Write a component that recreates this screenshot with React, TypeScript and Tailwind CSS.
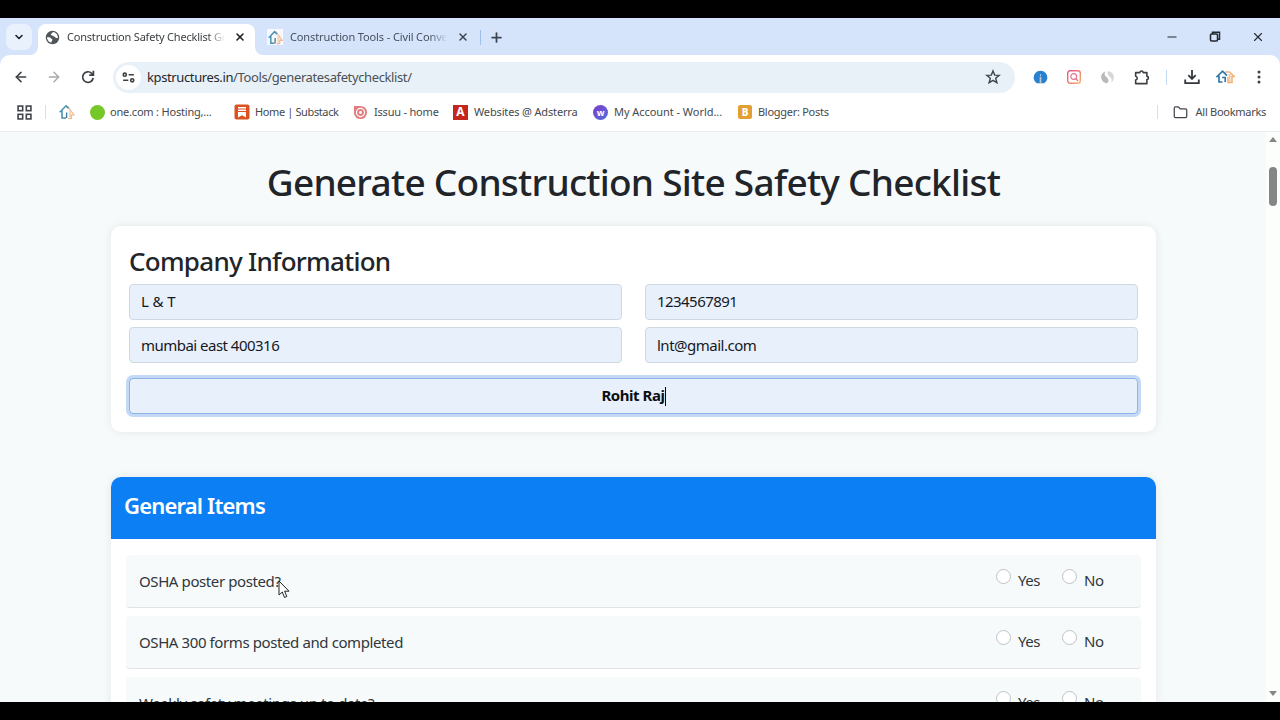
import React, { useState } from "react";
import { ChevronDown, X, Plus, ArrowLeft, ArrowRight, Folder, Minus } from "lucide-react";

const companyFields = [
  { value: "L & T", className: "pb-px tracking-[-0.1px]" },
  { value: "1234567891", className: "pb-px tracking-[-0.55px]" },
  { value: "mumbai east 400316", className: "tracking-[-0.52px]" },
  { value: "lnt@gmail.com", className: "tracking-[-0.5px]" },
];

const generalItems = [
  "OSHA poster posted?",
  "OSHA 300 forms posted and completed",
  "Weekly safety meetings up to date?",
];

function HouseIcon({ className = "" }: { className?: string }) {
  return (
    <svg viewBox="0 0 16 16" className={className} fill="none">
      <path d="M8.500 1.800 15 11h-2.500v3.500H9" stroke="#f0b890" strokeWidth="1.200" />
      <path d="M10 5.500v8h2V8.500z" fill="#f6d2ae" />
      <path d="M7 14H3V7.500H1.500L7 1.800l2.500 2.600" stroke="#4a93b4" strokeWidth="1.600" />
      <path d="M7.600 14V8.500" stroke="#3f7f9d" strokeWidth="1.400" />
    </svg>
  );
}

function HouseWideIcon() {
  return (
    <svg viewBox="0 0 19 16" className="ml-[16px] w-[19px] h-[16px]" fill="none">
      <path d="M9 3h4.500l4.500 4.500h-2v6h-4V8" stroke="#f0b47c" strokeWidth="1.600" />
      <path d="M12.500 5h2v8h-2z" fill="#f4c79a" />
      <path d="M6.500 13H3V7.500H1.200L6.500 2.200l4.500 4.500" stroke="#2f77a8" strokeWidth="1.700" />
      <path d="M6 8.500h3.200V13" stroke="#2f77a8" strokeWidth="1.600" />
    </svg>
  );
}

function GlobeIcon() {
  return (
    <svg viewBox="0 0 16 16" className="w-[15px] h-[15px] shrink-0">
      <circle cx="8" cy="8" r="7.200" fill="#50555a" />
      <path d="M2.200 7.500c2 .2 3.600.3 4.200 1.400.3.800 1.500.7 1.500 1.800 0 1-1.200 1-1.200 2.800C4 13 2.100 10.500 2.200 7.500z" fill="#fff" />
      <path d="M8.600 2.100c-1.300.6-.8 1.600-2 2-1 .4-.5 1.500.6 1.500 1.200 0 1.300 1.400 2.600 1.400 1.200 0 1 1.600 2.200 1.600h1.800c.2-3.200-2-6.100-5.200-6.500z" fill="#fff" />
    </svg>
  );
}

function TabFlare({ side }: { side: "left" | "right" }) {
  return (
    <svg
      viewBox="0 0 8 8"
      className={side === "left" ? "absolute bottom-0 -left-2 w-2 h-2" : "absolute bottom-0 -right-2 w-2 h-2"}
    >
      <path d={side === "left" ? "M8 0v8H0a8 8 0 0 0 8-8z" : "M0 0v8h8a8 8 0 0 1-8-8z"} fill="#fff" />
    </svg>
  );
}

function TabStrip() {
  return (
    <div className="flex h-[37px] bg-[#d5e3fb] text-[11px]">
      <div className="flex items-center justify-center mt-[6px] ml-[6px] w-[26px] h-[26px] rounded-lg bg-[#e9f1fd] shrink-0">
        <ChevronDown className="w-3 h-3 text-[#1f2328]" strokeWidth={3.2} />
      </div>
      <div className="relative flex items-center mt-[6px] ml-[6px] pl-[7px] pb-[5px] w-[217px] h-[31px] bg-white rounded-t-lg shrink-0">
        <TabFlare side="left" />
        <GlobeIcon />
        <div className="ml-[7px] mt-px w-[158px] overflow-hidden whitespace-nowrap text-[#3c4043] tracking-[-0.2px] [mask-image:linear-gradient(to_right,#000_141px,transparent_158px)]">
          Construction Safety Checklist Generator
        </div>
        <X className="ml-[9px] w-3 h-3 text-[#1f2328]" strokeWidth={3.2} />
        <TabFlare side="right" />
      </div>
      <div className="flex items-center mt-[6px] ml-[12px] w-[213px] h-[26px] shrink-0">
        <div className="flex items-center justify-center w-4 h-4 bg-white/80">
          <HouseIcon className="w-[15px] h-[15px]" />
        </div>
        <div className="ml-[7px] mt-px w-[157px] overflow-hidden whitespace-nowrap text-[#46505e] tracking-[-0.12px] [mask-image:linear-gradient(to_right,#000_140px,transparent_157px)]">
          Construction Tools - Civil Converter
        </div>
        <X className="ml-[10px] w-3 h-3 text-[#3c4450]" strokeWidth={3} />
      </div>
      <div className="mt-[12px] w-px h-[15px] bg-[#9ec0ec]" />
      <Plus className="mt-[12px] ml-[8px] w-[15px] h-[15px] text-[#3c4450]" strokeWidth={2.8} />
      <div className="flex ml-auto mt-[12px] mr-[15px] text-[#23282f]">
        <Minus className="w-[14px] h-[14px]" strokeWidth={2} />
        <svg viewBox="0 0 14 14" className="ml-[29px] w-[14px] h-[14px]" fill="none" stroke="currentColor" strokeWidth="1.500">
          <rect x="2.500" y="4" width="7" height="7" rx="1" />
          <path d="M4.500 4V2.300h7v7H9.800" />
        </svg>
        <X className="ml-[29px] w-[14px] h-[14px]" strokeWidth={1.9} />
      </div>
    </div>
  );
}

function Toolbar() {
  return (
    <div className="bg-[#d5e3fb]">
      <div className="flex items-center h-[44px] pl-[13px] bg-white rounded-t-[10px]">
        <ArrowLeft className="w-[16px] h-[16px] text-[#3c4043]" strokeWidth={2.3} />
        <ArrowRight className="ml-[17px] w-[16px] h-[16px] text-[#a5a8ab]" strokeWidth={2.1} />
        <svg viewBox="0 0 16 16" className="ml-[18px] w-4 h-4" fill="none" stroke="#3c4043" strokeWidth="1.700">
          <path d="M13.200 9a5.300 5.300 0 1 1-1.500-4.700L13 5.700" />
          <path d="M13.400 1.800v4.300H9.200" />
        </svg>
        <div className="flex items-center ml-[17px] pl-[3px] w-[902px] h-[31px] bg-[#e9f1f8] rounded-full">
          <div className="flex items-center justify-center w-[25px] h-[25px] rounded-full bg-white">
            <svg viewBox="0 0 14 14" className="w-[13px] h-[13px]" fill="none" stroke="#3c4043" strokeWidth="1.700">
              <circle cx="3" cy="4" r="1.700" />
              <path d="M7.200 4h5.600M1.200 10H6.800" />
              <circle cx="11" cy="10" r="1.700" />
            </svg>
          </div>
          <div className="ml-[6px] mt-px text-[13px] tracking-[-0.38px] text-[#4b5054]">
            <span className="text-[#24282c]">kpstructures.in</span>/Tools/generatesafetychecklist/
          </div>
          <svg viewBox="0 0 16 16" className="ml-auto mr-[14px] w-4 h-4" fill="none" stroke="#41464b" strokeWidth="1.400">
            <path d="m8 1.900 1.700 4.200 4.500.3-3.500 2.900 1.200 4.400L8 11.300l-3.900 2.400 1.200-4.400-3.500-2.900 4.500-.3z" />
          </svg>
        </div>
        <svg viewBox="0 0 16 16" className="ml-[18px] w-[15px] h-[15px]">
          <path d="M4 14.200a7.300 7.300 0 1 1 8 0z" fill="#2a80d0" />
          <path d="M8 4.500v2" stroke="#a9cdf0" strokeWidth="1.200" />
          <path d="M8 7.200v7" stroke="#b9c8c6" strokeWidth="1.800" />
        </svg>
        <svg viewBox="0 0 16 16" className="ml-[18px] w-4 h-4" fill="none" strokeWidth="1.400">
          <defs>
            <linearGradient id="insta" x1="0" y1="0" x2="1" y2="1">
              <stop offset="0" stopColor="#e0559a" />
              <stop offset=".5" stopColor="#f07b74" />
              <stop offset="1" stopColor="#f3b474" />
            </linearGradient>
          </defs>
          <rect x="1.700" y="1.700" width="12.600" height="12.600" rx="2.500" stroke="url(#insta)" />
          <circle cx="7.700" cy="7.500" r="2.900" stroke="#e8728a" strokeWidth="1.200" />
          <path d="m9.900 9.700 2.200 2.200" stroke="#e8728a" />
        </svg>
        <svg viewBox="0 0 16 16" className="ml-[18px] w-[15px] h-[15px]">
          <path d="M6 1.500C2.500 2.500.8 5.500 1.300 8.500c.6 3.200 3.200 5.300 5.700 5.500 2.300-.6 2.800-3 1.300-5L5.800 6.300C4.500 4.800 4.700 3 6 1.500z" fill="#b9b9b9" />
          <path d="M8.500 1.300c3.500.3 6.200 2.700 6.300 6.200 0 2.500-1 4.500-3 5.800.9-1.700.8-3.500-.4-5L9 5.500c-1.200-1.500-1.200-3-.5-4.200z" fill="#d6d6d6" />
        </svg>
        <svg viewBox="0 0 18 18" className="ml-[18px] w-[17px] h-[17px]" fill="none" stroke="#3c4043" strokeWidth="1.700">
          <path d="M2.800 3.800h4.500a1.700 1.700 0 0 1 3.400 0h4v4a1.600 1.600 0 0 1 0 3.300v4.400H2.800v-3.800c2.200-.6 2.200-3.500 0-4z" strokeLinejoin="round" />
        </svg>
        <div className="ml-[16px] w-px h-[15px] bg-[#c5daf4]" />
        <svg viewBox="0 0 16 16" className="ml-[17px] w-4 h-4" fill="none" stroke="#34383c" strokeWidth="1.800">
          <path d="M8 1v8.500M4.300 6.200 8 9.900l3.700-3.700M1.200 10.500v3.600h13.600v-3.600" />
        </svg>
        <HouseWideIcon />
        <svg viewBox="0 0 16 16" className="ml-[16px] w-4 h-4" fill="#3c4043">
          <circle cx="8" cy="3" r="1.500" />
          <circle cx="8" cy="8" r="1.500" />
          <circle cx="8" cy="13" r="1.500" />
        </svg>
      </div>
    </div>
  );
}

function BookmarksBar() {
  return (
    <div className="flex items-center h-[33px] pb-[6px] bg-white border-b border-[#e9ebec] text-[11px] text-[#45494d] whitespace-nowrap">
      <svg viewBox="0 0 14 14" className="ml-[17px] w-[15px] h-[15px] shrink-0" fill="none" stroke="#41464b" strokeWidth="1.500">
        <rect x="1" y="1" width="4.300" height="4.300" />
        <rect x="8.700" y="1" width="4.300" height="4.300" />
        <rect x="1" y="8.700" width="4.300" height="4.300" />
        <rect x="8.700" y="8.700" width="4.300" height="4.300" />
      </svg>
      <div className="ml-[13px] w-px h-[14px] bg-[#d3e1f3] shrink-0" />
      <HouseIcon className="ml-[13px] w-4 h-4 shrink-0" />
      <div className="flex items-center ml-[15px] w-[144px]">
        <div className="w-[15px] h-[15px] rounded-full bg-[#76c728]" />
        <span className="ml-[5px] mt-px tracking-[-0.2px]">one.com : Hosting,...</span>
      </div>
      <div className="flex items-center w-[119px]">
        <svg viewBox="0 0 16 16" className="w-4 h-4">
          <rect x=".5" y=".5" width="15" height="15" rx="2" fill="#d9521f" />
          <path d="M4 3h8v1.500H4zM4 5.500h8V7H4zM4 8h8v5.500l-4-2.300-4 2.300z" fill="#fff" />
        </svg>
        <span className="ml-[5px] mt-px tracking-[-0.38px]">Home | Substack</span>
      </div>
      <div className="flex items-center w-[100px]">
        <svg viewBox="0 0 16 16" className="w-[15px] h-[15px]" fill="none">
          <path d="M1 1h7a7 7 0 1 1-7 7z" fill="#e17f80" />
          <circle cx="8" cy="8" r="4.300" stroke="#fff" strokeWidth="1.300" />
          <circle cx="8" cy="8" r="1.500" fill="#fff" />
        </svg>
        <span className="ml-[6px] mt-px tracking-[-0.2px]">Issuu - home</span>
      </div>
      <div className="flex items-center w-[140px]">
        <div className="flex items-center justify-center w-[15px] h-[15px] bg-[#c3271d] text-white text-[12px] font-bold leading-none">A</div>
        <span className="ml-[6px] mt-px tracking-[-0.15px]">Websites @ Adsterra</span>
      </div>
      <div className="flex items-center w-[145px]">
        <div className="flex items-center justify-center w-[15px] h-[15px] rounded-full bg-linear-to-br from-[#7a35c8] to-[#4a6fe0] text-white text-[9px] font-bold leading-none">
          w
        </div>
        <span className="ml-[6px] mt-px tracking-[-0.05px]">My Account - World...</span>
      </div>
      <div className="flex items-center">
        <div className="flex items-center justify-center w-[14px] h-[14px] rounded-[2px] bg-[#e2a033] text-white text-[10px] font-extrabold leading-none">
          B
        </div>
        <span className="ml-[6px] mt-px tracking-[-0.28px]">Blogger: Posts</span>
      </div>
      <div className="ml-auto w-px h-[14px] bg-[#d3e1f3]" />
      <Folder className="ml-[14px] w-[17px] h-[15px] text-[#41464b]" strokeWidth={2} />
      <span className="ml-[7px] mr-[14px] mt-px tracking-[-0.28px]">All Bookmarks</span>
    </div>
  );
}

function CompanyCard() {
  return (
    <section className="h-[206px] px-[18px] pt-[19px] bg-white rounded-[10px] shadow-[0_0_10px_rgba(0,0,0,0.08)]">
      <h2 className="h-[39px] text-[26px] leading-[32px] font-medium text-[#212529] whitespace-nowrap tracking-[-0.72px]">
        Company Information
      </h2>
      <div className="grid grid-cols-2 gap-x-[23px] gap-y-[7px]">
        {companyFields.map((field) => (
          <div
            key={field.value}
            className={`flex items-center h-[36px] px-[11px] bg-[#e8f0fc] border border-[#cfd9e3] rounded-[4px] text-[15px] text-[#15191d] ${field.className}`}
          >
            {field.value}
          </div>
        ))}
      </div>
      <div className="flex items-center justify-center mt-[15px] h-[36px] bg-[#e8f0fc] border border-[#8db4e8] rounded-[4px] ring-3 ring-[#c4d9f5] text-[15px] font-bold text-[#0c0f12]">
        <span className="pb-px tracking-[-0.45px]">Rohit Raj</span>
        <span className="w-px h-[19px] bg-black" />
      </div>
    </section>
  );
}

function RadioOption({ label, checked, onSelect }: { label: string; checked: boolean; onSelect: () => void }) {
  return (
    <button onClick={onSelect} className="flex w-[66px] text-left">
      <span
        className={`w-[15px] h-[15px] mt-[14px] rounded-full border ${
          checked ? "bg-[#0d6efd] border-[#0d6efd]" : "bg-white border-[#bfc3c6]"
        }`}
      />
      <span className="ml-[7px] mt-[14px] leading-[22px]">{label}</span>
    </button>
  );
}

function ChecklistRow({ label }: { label: string }) {
  const [answer, setAnswer] = useState("");
  return (
    <div className="flex h-[53px] pl-[13px] bg-[#f7fafb] border-b border-[#e0e4e6] rounded-[4px] text-[15px] text-[#30363b] shrink-0">
      <span className="mt-[15px] leading-[22px] whitespace-nowrap tracking-[-0.4px]">{label}</span>
      <div className="flex items-start ml-auto mr-[13px] tracking-[-0.5px]">
        <RadioOption label="Yes" checked={answer === "yes"} onSelect={() => setAnswer("yes")} />
        <RadioOption label="No" checked={answer === "no"} onSelect={() => setAnswer("no")} />
      </div>
    </div>
  );
}

function Scrollbar() {
  return (
    <div className="flex flex-col items-center w-[14px] bg-[#fcfefc] shrink-0">
      <svg viewBox="0 0 8 5" className="mt-[5px] w-2 h-[5px]">
        <path d="M0 5 4 0l4 5z" fill="#858585" />
      </svg>
      <div className="mt-[25px] w-2 h-[39px] rounded-full bg-[#858585]" />
      <svg viewBox="0 0 8 5" className="mt-auto mb-[6px] w-2 h-[5px]">
        <path d="M0 0l4 5 4-5z" fill="#858585" />
      </svg>
    </div>
  );
}

export default function App() {
  return (
    <div className="relative w-[1280px] h-[720px] py-[18px] bg-black overflow-hidden font-['Noto_Sans','Open_Sans',sans-serif]">
      <div className="flex flex-col h-[684px] overflow-hidden">
        <TabStrip />
        <Toolbar />
        <BookmarksBar />
        <div className="flex flex-1 min-h-0">
          <main className="flex-1 min-w-0 pl-[111px] pr-[110px] bg-[#f7fafb] overflow-hidden">
            <h1 className="h-[94px] pt-[27px] text-center text-[37px] leading-[46px] font-medium text-[#212529] whitespace-nowrap tracking-[-0.74px]">
              Generate Construction Site Safety Checklist
            </h1>
            <CompanyCard />
            <section className="mt-[45px] bg-white rounded-[10px] shadow-[0_0_10px_rgba(0,0,0,0.08)]">
              <h3 className="h-[62px] px-[13px] pt-[13px] bg-[#0c7ff5] rounded-t-[10px] text-[22px] leading-[30px] font-semibold text-white tracking-[-0.82px]">
                General Items
              </h3>
              <div className="flex flex-col gap-2 pt-4 px-[15px]">
                {generalItems.map((item) => (
                  <ChecklistRow key={item} label={item} />
                ))}
              </div>
            </section>
          </main>
          <Scrollbar />
        </div>
      </div>

      {/* Mouse pointer */}
      <svg viewBox="0 0 12 19" className="absolute left-[278px] top-[580px] w-[12px] h-[19px]">
        <path d="M1 1v14l3.300-3 2.200 5.500 2.300-1L6.600 11.200H11z" fill="#fff" stroke="#222" strokeWidth="1" />
      </svg>
    </div>
  );
}
